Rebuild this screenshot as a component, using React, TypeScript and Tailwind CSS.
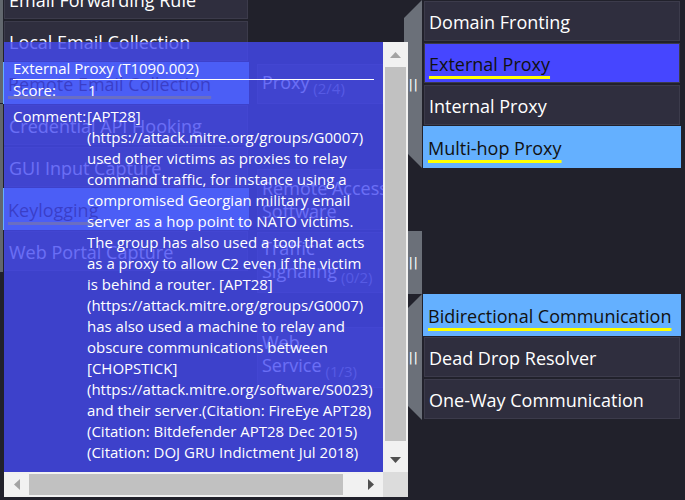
import React from 'react';

type Kind = 'plain' | 'blue' | 'sky';

const Cell = ({ name, kind = 'plain' }: { name: string; kind?: Kind }) => {
    if (kind === 'sky') {
        return (
            <div className="flex h-[42px] items-center overflow-hidden whitespace-nowrap bg-[#64b0ff] px-[5px] pt-[2px] text-[18px] leading-[24px] text-[#111]">
                <span className="underline decoration-[#ffff00] decoration-[3px] underline-offset-[5px]">{name}</span>
            </div>
        );
    }
    const bg = kind === 'blue' ? 'bg-[#4646ff] text-[#111]' : 'bg-[#2f2e3e] text-white';
    return (
        <div className={`m-px flex h-[40px] items-center overflow-hidden whitespace-nowrap border border-[#3c3b4b] px-[4px] pt-[2px] text-[18px] leading-[24px] ${bg}`}>
            {kind === 'blue' ? (
                <span className="underline decoration-[#ffff00] decoration-[3px] underline-offset-[5px]">{name}</span>
            ) : (
                name
            )}
        </div>
    );
};

const Technique = ({ name, count, tall, split }: { name: string; count?: string; tall?: boolean; split?: boolean }) => {
    const words = name.split(' ');
    return (
        <div
            className={`m-px flex w-[146px] items-center overflow-hidden border border-[#3c3b4b] bg-[#2f2e3e] px-[4px] text-[18px] leading-[23px] text-white ${
                tall ? 'h-[61px]' : 'h-[40px] pt-[2px]'
            }`}
        >
            <span>
                {split ? (
                    <>
                        {words[0]}
                        <br />
                        {words.slice(1).join(' ')}
                    </>
                ) : (
                    name
                )}
                {count && <span className="align-sub text-[15px] text-[#9a9aa6]">{'\u00a0' + count}</span>}
            </span>
        </div>
    );
};

// sidebar grip
const Handle = () => (
    <span className="pl-[1px] font-['DejaVu_Sans',sans-serif] text-[13px] leading-none tracking-[0.5px] text-white">||</span>
);

const comment = [
    '[APT28]',
    '(https://attack.mitre.org/groups/G0007)',
    'used other victims as proxies to relay',
    'command traffic, for instance using a',
    'compromised Georgian military email',
    'server as a hop point to NATO victims.',
    'The group has also used a tool that acts',
    'as a proxy to allow C2 even if the victim',
    'is behind a router. [APT28]',
    '(https://attack.mitre.org/groups/G0007)',
    'has also used a machine to relay and',
    'obscure communications between',
    '[CHOPSTICK]',
    '(https://attack.mitre.org/software/S0023)',
    'and their server.(Citation: FireEye APT28)',
    '(Citation: Bitdefender APT28 Dec 2015)',
    '(Citation: DOJ GRU Indictment Jul 2018)',
];

export default function App() {
    return (
        <div className="relative h-[500px] w-[685px] overflow-hidden bg-[#21212b] font-['Segoe_UI','Open_Sans',sans-serif]">
            <div className="flex items-start">
                {/* collection column */}
                <div className="-mt-[22px] flex w-[249px]">
                    <div className="flex w-[3px] flex-col">
                        <div className="h-[125px] bg-[#62676e]" />
                        <div className="h-px" />
                        <div className="h-[168px] bg-[#62676e]" />
                    </div>
                    <div className="flex w-[246px] flex-col">
                        <Cell name="Email Forwarding Rule" />
                        <Cell name="Local Email Collection" />
                        <Cell name="Remote Email Collection" kind="sky" />
                        <Cell name="Credential API Hooking" />
                        <Cell name="GUI Input Capture" />
                        <Cell name="Keylogging" kind="sky" />
                        <Cell name="Web Portal Capture" />
                    </div>
                </div>

                {/* command and control column */}
                <div className="ml-[7px] flex w-[425px] flex-col">
                    <div className="flex h-[168px]">
                        <div className="flex w-[148px] items-center">
                            <Technique name="Proxy" count="(2/4)" />
                        </div>
                        <div className="flex w-[18px] items-center justify-center bg-[#6b7079] [clip-path:polygon(0_18px,100%_0,100%_100%,0_calc(100%-18px))]">
                            <Handle />
                        </div>
                        <div className="ml-px flex w-[258px] flex-col">
                            <Cell name="Domain Fronting" />
                            <Cell name="External Proxy" kind="blue" />
                            <Cell name="Internal Proxy" />
                            <Cell name="Multi-hop Proxy" kind="sky" />
                        </div>
                    </div>
                    <div className="flex h-[63px]">
                        <Technique name="Remote Access Software" tall />
                    </div>
                    <div className="flex h-[63px]">
                        <div className="flex w-[148px]">
                            <Technique name="Traffic Signaling" count="(0/2)" tall split />
                        </div>
                        <div className="flex w-[18px] items-center justify-center bg-[#6b7079]">
                            <Handle />
                        </div>
                    </div>
                    <div className="flex h-[126px]">
                        <div className="flex w-[148px] items-center">
                            <Technique name="Web Service" count="(1/3)" tall split />
                        </div>
                        <div className="flex w-[18px] items-center justify-center bg-[#6b7079] [clip-path:polygon(0_18px,100%_0,100%_100%,0_calc(100%-18px))]">
                            <Handle />
                        </div>
                        <div className="ml-px flex w-[258px] flex-col">
                            <Cell name="Bidirectional Communication" kind="sky" />
                            <Cell name="Dead Drop Resolver" />
                            <Cell name="One-Way Communication" />
                        </div>
                    </div>
                </div>
            </div>

            {/* tooltip */}
            <div className="absolute left-[4px] top-[42px] flex w-[404px] flex-col">
                <div className="flex h-[430px]">
                    <div className="w-[379px] overflow-hidden bg-[rgba(69,74,244,0.8)] px-[9px] pt-[16px] text-[15px] leading-[21px] text-white">
                        <div className="whitespace-nowrap border-b border-white">External Proxy (T1090.002)</div>
                        <div className="flex">
                            <div className="w-[75px]">Score:</div>
                            <div>1</div>
                        </div>
                        <div className="mt-[5px] flex">
                            <div className="w-[74px] whitespace-nowrap">Comment:</div>
                            <div className="whitespace-nowrap">
                                {comment.map((line, i) => (
                                    <div key={i}>{line}</div>
                                ))}
                            </div>
                        </div>
                    </div>
                    <div className="flex w-[25px] flex-col bg-[#f1f1f1]">
                        <div className="flex h-[25px] items-center justify-center">
                            <svg width="11" height="6" viewBox="0 0 11 6">
                                <polygon points="0,6 5.5,0 11,6" fill="#a3a3a3" />
                            </svg>
                        </div>
                        <div className="mx-[2px] h-[374px] bg-[#c1c1c1]" />
                        <div className="flex flex-1 items-end">
                            <div className="flex h-[25px] w-full items-center justify-center">
                                <svg width="11" height="6" viewBox="0 0 11 6">
                                    <polygon points="0,0 11,0 5.5,6" fill="#505050" />
                                </svg>
                            </div>
                        </div>
                    </div>
                </div>
                <div className="flex h-[25px]">
                    <div className="flex w-[379px] items-center bg-[#f1f1f1]">
                        <div className="flex h-full w-[25px] items-center justify-center">
                            <svg width="6" height="11" viewBox="0 0 6 11">
                                <polygon points="6,0 0,5.5 6,11" fill="#a3a3a3" />
                            </svg>
                        </div>
                        <div className="h-[21px] w-[314px] bg-[#c1c1c1]" />
                        <div className="flex-1" />
                        <div className="flex h-full w-[25px] items-center justify-center">
                            <svg width="6" height="11" viewBox="0 0 6 11">
                                <polygon points="0,0 6,5.5 0,11" fill="#505050" />
                            </svg>
                        </div>
                    </div>
                    <div className="w-[25px] bg-[#dcdcdc]" />
                </div>
            </div>
        </div>
    );
}
